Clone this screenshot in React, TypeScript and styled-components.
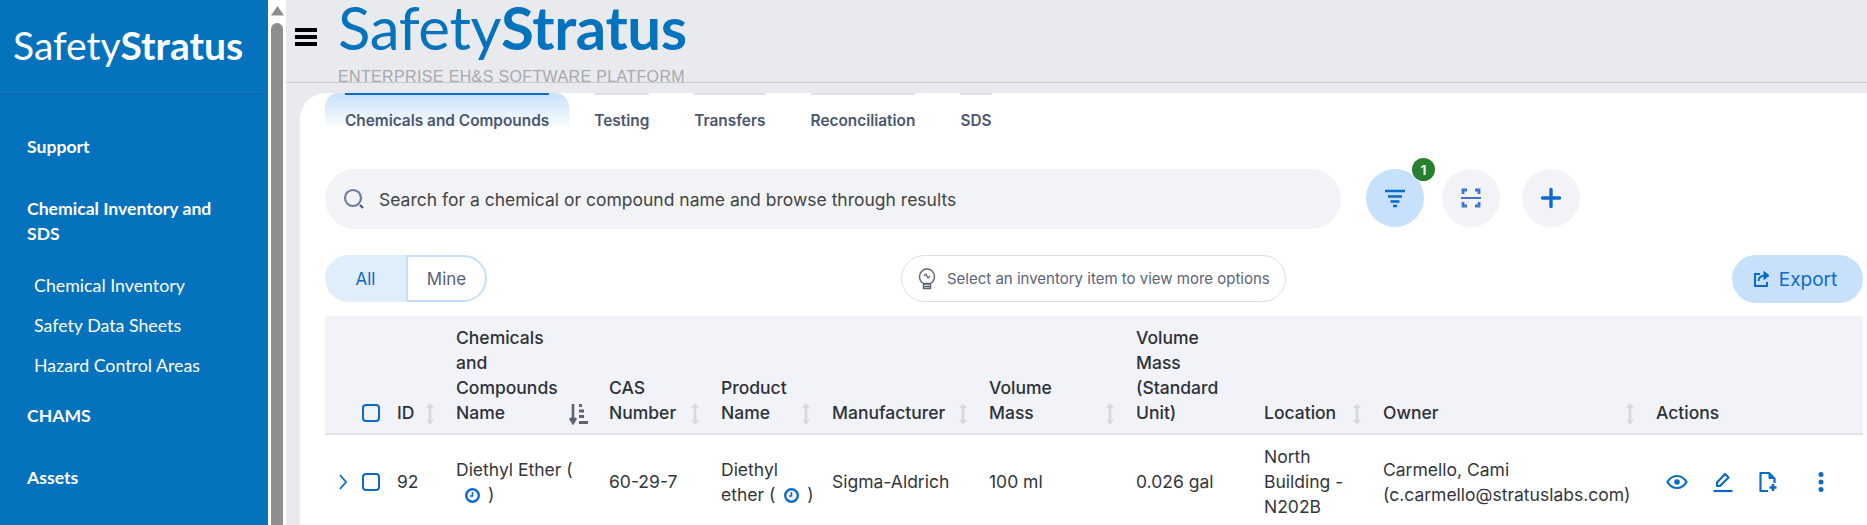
import { FC } from "react";
import styled, { createGlobalStyle } from "styled-components";

const blue = "#0b6bcb";

const GlobalStyle = createGlobalStyle`
  html, body {
    margin: 0;
    padding: 0;
    height: 525px;
    overflow: hidden;
    background: #e9eaee;
  }
  * { box-sizing: border-box; }
`;

const tabs = ["Chemicals and Compounds", "Testing", "Transfers", "Reconciliation", "SDS"];

const columns = [
  { label: ["ID"], width: 59, sort: "plain" },
  { label: ["Chemicals", "and", "Compounds", "Name"], width: 153, sort: "desc" },
  { label: ["CAS", "Number"], width: 112, sort: "plain" },
  { label: ["Product", "Name"], width: 111, sort: "plain" },
  { label: ["Manufacturer"], width: 157, sort: "plain" },
  { label: ["Volume", "Mass"], width: 147, sort: "plain" },
  { label: ["Volume", "Mass", "(Standard", "Unit)"], width: 128, sort: "" },
  { label: ["Location"], width: 119, sort: "plain" },
  { label: ["Owner"], width: 273, sort: "plain" },
  { label: ["Actions"], width: 207, sort: "" },
];

const SortIcon: FC = () => (
  <svg width="14" height="22" viewBox="0 0 14 22" fill="none" stroke="#d6d8de" strokeWidth="2.6">
    <path d="M7 2v18" />
    <path d="M4 5l3-3 3 3M4 17l3 3 3-3" strokeWidth="1.8" />
  </svg>
);

const SortDescIcon: FC = () => (
  <svg width="22" height="22" viewBox="0 0 22 22" fill="none" stroke="#5f6470" strokeWidth="3">
    <path d="M5 1v18M2 15l3 5 3-5" strokeWidth="2.6" />
    <path d="M11 2.500h3M11 8h5M11 13.500h5M11 19.500h9" />
  </svg>
);

const ClockIcon: FC = () => (
  <svg width="17" height="17" viewBox="0 0 17 17" fill="none" stroke={blue} strokeWidth="2.400">
    <circle cx="8.500" cy="8.500" r="6.300" />
    <path d="M8.500 5v4H6" strokeWidth="1.600" />
  </svg>
);

const App: FC = () => {
  return (
    <Page>
      <GlobalStyle />
      <Sidebar>
        <SideLogo>
          <LogoLight>Safety</LogoLight>
          <LogoBold>Stratus</LogoBold>
        </SideLogo>
        <Nav>
          <NavItem>Support</NavItem>
          <NavItem>
            Chemical Inventory and
            <br />
            SDS
          </NavItem>
          <SubNav>
            <SubItem>Chemical Inventory</SubItem>
            <SubItem>Safety Data Sheets</SubItem>
            <SubItem>Hazard Control Areas</SubItem>
          </SubNav>
          <NavItem>CHAMS</NavItem>
          <NavItem>Assets</NavItem>
        </Nav>
      </Sidebar>

      <ScrollTrack>
        <svg width="13" height="10" viewBox="0 0 13 10">
          <path d="M6.500 0l6.500 9.500H0z" fill="#8e8e8e" />
        </svg>
        <ScrollThumb />
      </ScrollTrack>

      <Main>
        <Header>
          <Burger>
            <svg width="22" height="18" viewBox="0 0 22 18" fill="#000">
              <rect y="0" width="22" height="4" rx="0.5" />
              <rect y="7" width="22" height="4" rx="0.5" />
              <rect y="14" width="22" height="4" rx="0.5" />
            </svg>
          </Burger>
          <Brand>
            <BrandName>
              <LogoLight>Safety</LogoLight>
              <LogoBold>Stratus</LogoBold>
            </BrandName>
            <Tagline>ENTERPRISE EH&amp;S SOFTWARE PLATFORM</Tagline>
          </Brand>
        </Header>

        <Card>
          <TabBar>
            {tabs.map((t, i) => (
              <Tab key={t} $active={i === 0}>
                <TabLabel $active={i === 0}>{t}</TabLabel>
              </Tab>
            ))}
          </TabBar>

          <SearchRow>
            <SearchBox>
              <svg width="24" height="24" viewBox="0 0 24 24" fill="none" stroke="#6d7f9c" strokeWidth="2.200">
                <circle cx="11" cy="11" r="8" />
                <path d="M18 18l3 3" stroke="#4b5670" />
              </svg>
              <SearchText>Search for a chemical or compound name and browse through results</SearchText>
            </SearchBox>
            <RoundButton $active>
              <svg width="22" height="20" viewBox="0 0 22 20" fill="none" stroke={blue} strokeWidth="2.600">
                <path d="M1 3h20M4 8.500h14M6.500 13.500h9M9 18h4" />
              </svg>
              <Badge>1</Badge>
            </RoundButton>
            <ScanButton>
              <svg width="22" height="22" viewBox="0 0 22 22" fill="none" stroke="#3f73d8" strokeWidth="2.800">
                <path d="M3 7V3h4M15 3h4v4M3 15v4h4M15 19h4v-4" />
                <path d="M1 11h20" strokeWidth="2" />
              </svg>
            </ScanButton>
            <AddButton>
              <svg width="22" height="22" viewBox="0 0 22 22" fill="none" stroke={blue} strokeWidth="3.400" strokeLinecap="round">
                <path d="M11 2.500v17M2.500 11h17" />
              </svg>
            </AddButton>
          </SearchRow>

          <FilterRow>
            <Segmented>
              <SegAll>All</SegAll>
              <SegMine>Mine</SegMine>
            </Segmented>
            <TipPill>
              <svg width="18" height="24" viewBox="0 0 18 24" fill="none" stroke="#5b6478" strokeWidth="1.400">
                <path d="M5.500 16.500C3 15 1.500 12.500 1.500 9.500a7.500 7.500 0 0 1 15 0c0 3-1.500 5.500-4 7z" />
                <path d="M5.500 17h7v4.500h-7zM5.500 19.500h7" />
                <path d="M6 9l2 -2 2 4 2-2" strokeWidth="1.200" />
              </svg>
              <span>Select an inventory item to view more options</span>
            </TipPill>
            <ExportButton>
              <svg width="18" height="18" viewBox="0 0 18 18" fill="none" stroke={blue} strokeWidth="2">
                <path d="M7 4H2v12h12v-4" />
                <path d="M5.500 11c.3-3.500 3-5.500 6.500-5.500" />
                <path d="M11 1.500l5 4-5 4z" fill={blue} strokeWidth="1" />
              </svg>
              Export
            </ExportButton>
          </FilterRow>

          <Table>
            <colgroup>
              <col width={37} />
              <col width={35} />
              {columns.map((c) => (
                <col key={c.label.join(" ")} width={c.width} />
              ))}
            </colgroup>
            <thead>
              <tr>
                <Th />
                <Th>
                  <HeadCheckBox />
                </Th>
                {columns.map((c) => (
                  <Th key={c.label.join(" ")}>
                    <HeadCell>
                      <span>
                        {c.label.map((l) => (
                          <HeadLine key={l}>{l}</HeadLine>
                        ))}
                      </span>
                      {c.sort === "plain" && <SortIcon />}
                      {c.sort === "desc" && <SortDescIcon />}
                    </HeadCell>
                  </Th>
                ))}
              </tr>
            </thead>
            <tbody>
              <tr>
                <ExpandCell>
                  <svg width="10" height="16" viewBox="0 0 10 16" fill="none" stroke={blue} strokeWidth="1.800">
                    <path d="M2 1l6 7-6 7" />
                  </svg>
                </ExpandCell>
                <Td>
                  <CheckBox />
                </Td>
                <Td>92</Td>
                <Td>
                  Diethyl Ether (
                  <br />
                  <ClockWrap $indent>
                    <ClockIcon />
                  </ClockWrap>{" "}
                  )
                </Td>
                <Td>60-29-7</Td>
                <Td>
                  Diethyl
                  <br />
                  ether ({" "}
                  <ClockWrap>
                    <ClockIcon />
                  </ClockWrap>{" "}
                  )
                </Td>
                <Td>Sigma-Aldrich</Td>
                <Td>100 ml</Td>
                <Td>0.026 gal</Td>
                <Td>
                  North
                  <br />
                  Building -
                  <br />
                  N202B
                </Td>
                <Td>
                  Carmello, Cami
                  <br />
                  (c.carmello@stratuslabs.com)
                </Td>
                <Td>
                  <Actions>
                    <svg width="22" height="22" viewBox="0 0 22 22" fill="none" stroke={blue} strokeWidth="2.200">
                      <path d="M1.500 11C4 6.500 7.500 5 11 5s7 1.500 9.500 6c-2.500 4.500-6 6-9.500 6s-7-1.500-9.500-6z" />
                      <circle cx="11" cy="11" r="2.800" fill={blue} stroke="none" />
                    </svg>
                    <svg width="22" height="22" viewBox="0 0 22 22" fill="none" stroke={blue} strokeWidth="2.200">
                      <path d="M5 15v-3.500L13 3l3.500 3.500L8 15z" strokeLinejoin="round" />
                      <path d="M1.500 20h19" />
                    </svg>
                    <svg width="20" height="22" viewBox="0 0 20 22" fill="none" stroke={blue} strokeWidth="2.200">
                      <path d="M10 20H2.500V2h8.500l5.500 5.500V12" strokeLinejoin="round" />
                      <path d="M11 2v5.500h5.500z" fill={blue} strokeWidth="1" />
                      <path d="M15 13v7M11.500 16.500h7" strokeWidth="2.600" />
                    </svg>
                    <MoreDots>
                      <svg width="8" height="22" viewBox="0 0 8 22" fill={blue}>
                        <circle cx="4" cy="3.500" r="2.500" />
                        <circle cx="4" cy="11" r="2.500" />
                        <circle cx="4" cy="18.500" r="2.500" />
                      </svg>
                    </MoreDots>
                  </Actions>
                </Td>
              </tr>
            </tbody>
          </Table>
        </Card>
      </Main>
    </Page>
  );
};

const Page = styled.div`
  display: flex;
  width: 1867px;
  height: 525px;
  overflow: hidden;
  background: #e9eaee;
  font-family: Inter, "Liberation Sans", sans-serif;
`;

const Sidebar = styled.aside`
  width: 268px;
  flex-shrink: 0;
  background: #0472bd;
  color: #fff;
  font-family: Lato, "Liberation Sans", sans-serif;
`;

const SideLogo = styled.div`
  height: 95px;
  padding: 20px 0 0 13px;
  font-size: 39px;
  line-height: 50px;
  border-bottom: 1px solid #0766a8;
`;

const LogoLight = styled.span`
  font-weight: 400;
`;

const LogoBold = styled.span`
  font-weight: 700;
`;

const Nav = styled.nav`
  padding: 39px 0 0 27px;
`;

const NavItem = styled.div`
  font-size: 17.6px;
  font-weight: 700;
  line-height: 25px;
  margin-bottom: 37px;
`;

const SubNav = styled.div`
  margin: -10px 0 26px 7px;
`;

const SubItem = styled.div`
  font-size: 17.8px;
  line-height: 24px;
  margin-bottom: 16px;
`;

const ScrollTrack = styled.div`
  width: 18px;
  flex-shrink: 0;
  background: #fff;
  padding: 6px 0 0 3px;
  display: flex;
  flex-direction: column;
  gap: 7px;
  line-height: 0;
`;

const ScrollThumb = styled.div`
  width: 12px;
  flex: 1;
  background: #8e8e8e;
  border-radius: 6px 6px 0 0;
`;

const Main = styled.main`
  flex: 1;
  min-width: 0;
  display: flex;
  flex-direction: column;
`;

const Header = styled.header`
  height: 83px;
  flex-shrink: 0;
  display: flex;
  padding-left: 9px;
  border-bottom: 1px solid #c9cbd0;
`;

const Burger = styled.div`
  padding-top: 28px;
  line-height: 0;
`;

const Brand = styled.div`
  margin-left: 21px;
`;

const BrandName = styled.div`
  font-family: Lato, "Liberation Sans", sans-serif;
  font-size: 60px;
  letter-spacing: -0.4px;
  line-height: 54px;
  color: #0472bd;
`;

const Tagline = styled.div`
  font-family: "Liberation Sans", Arial, sans-serif;
  font-size: 16px;
  line-height: 18px;
  letter-spacing: 0.36px;
  color: #a7a9ad;
  margin-top: 14px;
  white-space: nowrap;
`;

const Card = styled.section`
  flex: 1;
  margin: 10px 0 0 14px;
  padding: 0 4px 0 25px;
  background: #fff;
  border-top-left-radius: 26px;
  min-height: 0;
`;

const TabBar = styled.div`
  display: flex;
  gap: 5px;
  height: 36px;
`;

const Tab = styled.div<{ $active?: boolean }>`
  padding: 0 20px;
  border-radius: 14px 14px 0 0;
  background: ${({ $active }) => ($active ? "linear-gradient(#c7e0fb, #fff)" : "transparent")};
`;

const TabLabel = styled.div<{ $active?: boolean }>`
  height: 36px;
  padding-top: 15px;
  border-top: 2px solid ${({ $active }) => ($active ? blue : "#dfe1e8")};
  font-size: 15.4px;
  font-weight: 600;
  line-height: 22px;
  color: #4b5670;
  white-space: nowrap;
`;

const SearchRow = styled.div`
  display: flex;
  align-items: flex-start;
  margin-top: 40px;
`;

const SearchBox = styled.div`
  width: 1016px;
  height: 60px;
  border-radius: 30px;
  background: #f1f3f7;
  display: flex;
  align-items: center;
  gap: 13px;
  padding-left: 17px;
`;

const SearchText = styled.span`
  font-size: 17.5px;
  color: #444;
`;

const RoundButton = styled.div<{ $active?: boolean }>`
  position: relative;
  width: 58px;
  height: 58px;
  margin-left: 25px;
  border-radius: 50%;
  background: ${({ $active }) => ($active ? "#c7e1fd" : "#f1f3f7")};
  display: flex;
  align-items: center;
  justify-content: center;
`;

const ScanButton = styled(RoundButton)`
  margin-left: 18px;
`;

const AddButton = styled(RoundButton)`
  margin-left: 22px;
`;

const Badge = styled.span`
  position: absolute;
  top: -11px;
  right: -11px;
  width: 23px;
  height: 23px;
  border-radius: 50%;
  background: #26802f;
  color: #fff;
  font-size: 13px;
  font-weight: 700;
  display: flex;
  align-items: center;
  justify-content: center;
`;

const FilterRow = styled.div`
  display: flex;
  align-items: flex-start;
  margin-top: 26px;
  height: 61px;
`;

const Segmented = styled.div`
  display: flex;
  width: 162px;
  height: 47px;
`;

const SegAll = styled.div`
  width: 81px;
  background: #e0edfb;
  color: ${blue};
  border-radius: 24px 0 0 24px;
  font-size: 17px;
  display: flex;
  align-items: center;
  justify-content: center;
`;

const SegMine = styled.div`
  width: 81px;
  border: 2px solid #c5dffb;
  border-radius: 0 24px 24px 0;
  color: #56607a;
  font-size: 17px;
  display: flex;
  align-items: center;
  justify-content: center;
`;

const TipPill = styled.div`
  width: 385px;
  height: 47px;
  margin-left: 414px;
  border: 1px solid #dcdde1;
  border-radius: 24px;
  display: flex;
  align-items: center;
  gap: 11px;
  padding-left: 16px;
  font-size: 15px;
  color: #5b6478;
  white-space: nowrap;
`;

const ExportButton = styled.div`
  width: 131px;
  height: 48px;
  margin-left: auto;
  padding-right: 5px;
  border-radius: 24px;
  background: #c7e1fd;
  color: ${blue};
  font-size: 19px;
  display: flex;
  align-items: center;
  justify-content: center;
  gap: 8px;
`;

const Table = styled.table`
  width: 1538px;
  table-layout: fixed;
  border-collapse: collapse;
`;

const Th = styled.th`
  background: #f1f3f8;
  border-bottom: 2px solid #e1e3e8;
  height: 118px;
  padding: 0 0 8px;
  vertical-align: bottom;
  text-align: left;
  font-size: 17.5px;
  font-weight: 500;
  line-height: 25px;
  color: #2e3138;
`;

const HeadCell = styled.div`
  display: flex;
  justify-content: space-between;
  align-items: flex-end;
  padding: 0 19px 0 0;
`;

const HeadLine = styled.div`
  white-space: nowrap;
`;

const CheckBox = styled.div`
  width: 18px;
  height: 18px;
  border: 2px solid ${blue};
  border-radius: 4px;
`;

const HeadCheckBox = styled(CheckBox)`
  margin-bottom: 3px;
`;

const Td = styled.td`
  padding: 9px 0;
  font-size: 17.5px;
  line-height: 25px;
  color: #33363c;
  vertical-align: middle;
  white-space: nowrap;
`;

const ExpandCell = styled(Td)`
  padding-left: 13px;
  line-height: 0;
`;

const ClockWrap = styled.span<{ $indent?: boolean }>`
  display: inline-block;
  vertical-align: -3px;
  line-height: 0;
  margin: 0 2px 0 ${({ $indent }) => ($indent ? "8px" : "3px")};
`;

const Actions = styled.div`
  display: flex;
  align-items: center;
  gap: 24px;
  padding-left: 10px;
  line-height: 0;
`;

const MoreDots = styled.div`
  margin-left: 15px;
`;

export default App;
